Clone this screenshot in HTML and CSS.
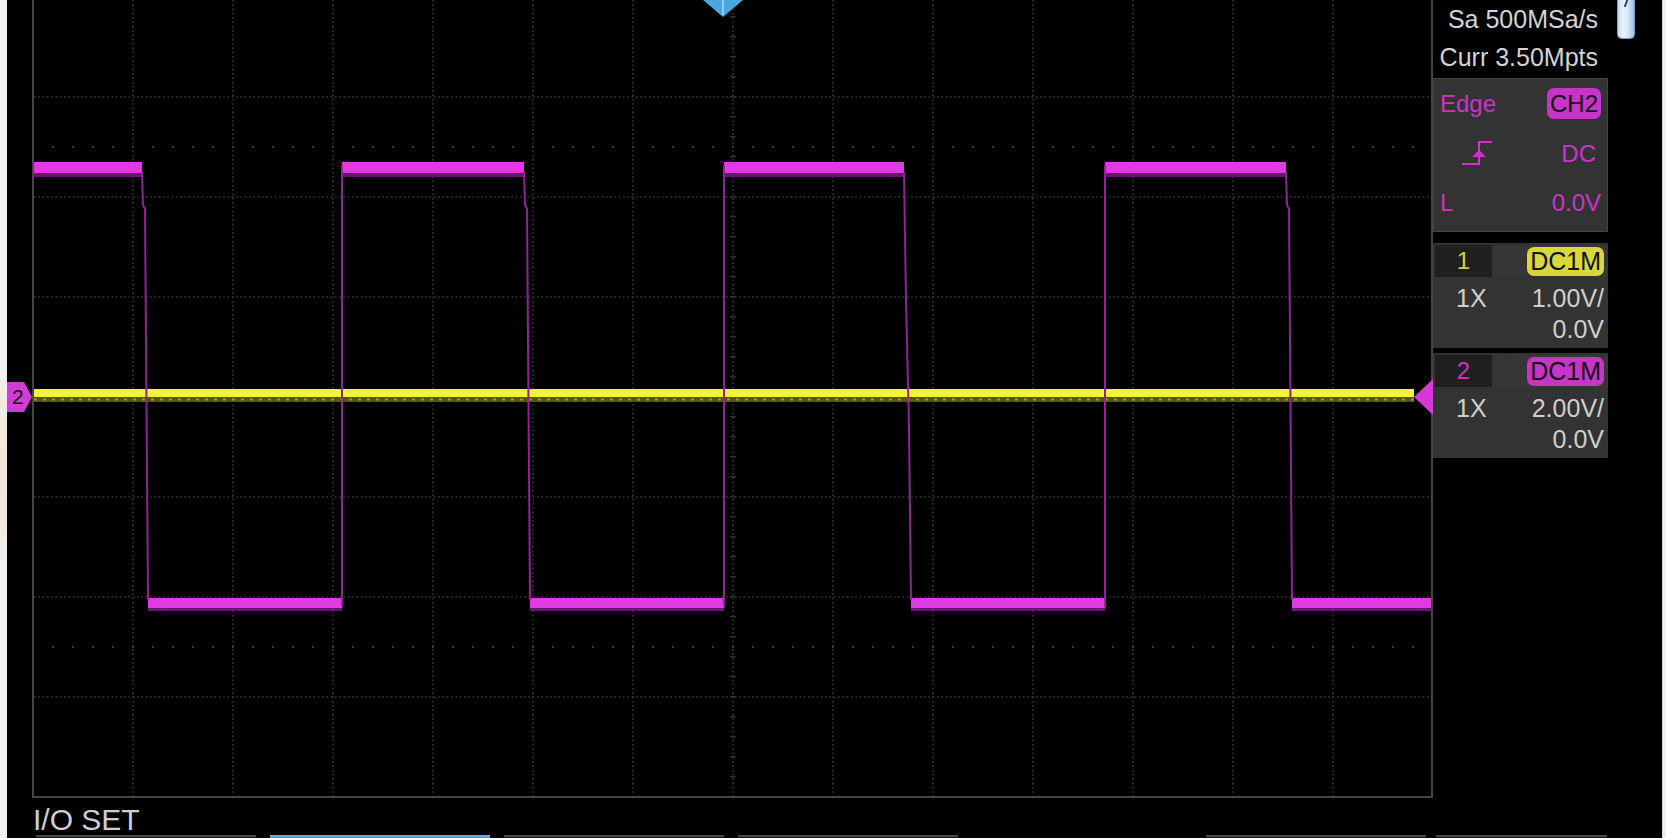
FILE: index.html
```html
<!DOCTYPE html>
<html>
<head>
<meta charset="utf-8">
<link rel="stylesheet" href="styles.css">
</head>
<body>
<div class="page">
  <div class="edge-left"></div>
  <div class="screen">
    <div class="main">
      <div class="gutter"><div class="ch-marker">2</div></div>
      <svg class="grid" width="1401" height="800" viewBox="32 0 1401 800">
        <g stroke="#393939" stroke-width="1.6" stroke-dasharray="1.6 2.7" fill="none">
          <path d="M133 0V795M233 0V795M333 0V795M433 0V795M533 0V795M633 0V795M733 0V795M833 0V795M933 0V795M1033 0V795M1133 0V795M1233 0V795M1333 0V795"/>
          <path d="M34 97H1431M34 197H1431M34 297H1431M34 397H1431M34 497H1431M34 597H1431M34 697H1431"/>
        </g>
        <g stroke="#2e2e2e" fill="none">
          <line x1="733" y1="16" x2="733" y2="796" stroke-width="6" stroke-dasharray="1.5 18.5"/>
          <line x1="52" y1="397" x2="1431" y2="397" stroke-width="6" stroke-dasharray="1.5 18.5"/>
        </g>
        <g stroke="#3a3a3a" fill="none">
          <line x1="52" y1="147" x2="1431" y2="147" stroke-width="2" stroke-dasharray="2 18"/>
          <line x1="52" y1="647" x2="1431" y2="647" stroke-width="2" stroke-dasharray="2 18"/>
        </g>
        <g stroke="#454545" stroke-width="2" fill="none">
          <path d="M33 0V797H1432V0"/>
        </g>
        <rect x="34" y="389" width="1380" height="8" fill="#f2f23e"/>
        <rect x="34" y="397" width="1380" height="5" fill="#55550f"/>
        <line x1="34" y1="399.5" x2="1414" y2="399.5" stroke="#9a9a2a" stroke-width="2" stroke-dasharray="3 6"/>
        <g fill="#e03ae4">
          <rect x="34" y="162" width="108" height="11"/>
          <rect x="342" y="162" width="182" height="11"/>
          <rect x="724" y="162" width="180" height="11"/>
          <rect x="1105" y="162" width="181" height="11"/>
          <rect x="148" y="598" width="194" height="10"/>
          <rect x="530" y="598" width="194" height="10"/>
          <rect x="911" y="598" width="194" height="10"/>
          <rect x="1292" y="598" width="139" height="10"/>
        </g>
        <g fill="#661670">
          <rect x="34" y="173" width="108" height="4"/>
          <rect x="342" y="173" width="182" height="4"/>
          <rect x="724" y="173" width="180" height="4"/>
          <rect x="1105" y="173" width="181" height="4"/>
          <rect x="148" y="608" width="194" height="3"/>
          <rect x="530" y="608" width="194" height="3"/>
          <rect x="911" y="608" width="194" height="3"/>
          <rect x="1292" y="608" width="139" height="3"/>
        </g>
        <g stroke="#8e2496" stroke-width="2" fill="none">
          <path d="M142 172L143 205L145 209L148 600"/>
          <path d="M342 607V165"/>
          <path d="M524 172L525 205L527 209L530 600"/>
          <path d="M724 607V165"/>
          <path d="M904 172L906 300L909 427L911 600"/>
          <path d="M1105 607V165"/>
          <path d="M1286 172L1287 205L1289 209L1292 600"/>
        </g>
        <polygon points="1414,397 1433,379 1433,415" fill="#d63ad6"/>
        <polygon points="703,0 743,0 723,17" fill="#4aa6df"/>
        <line x1="723" y1="0" x2="723" y2="15" stroke="#a6daf7" stroke-width="1.5"/>
      </svg>
      <div class="panel">
        <div class="acq">
          <div class="acq-line">Sa 500MSa/s</div>
          <div class="acq-line">Curr 3.50Mpts</div>
        </div>
        <div class="trig">
          <div class="trow"><span class="mag">Edge</span><span class="pill pill-mag">CH2</span></div>
          <div class="trow">
            <svg class="edge-icon" width="30" height="25" viewBox="0 0 30 25">
              <path d="M0 23H17V1H30" stroke="#cc33cc" stroke-width="2" fill="none"/>
              <polygon points="10,16 24,16 17,9" fill="#cc33cc"/>
            </svg>
            <span class="mag dc">DC</span>
          </div>
          <div class="trow"><span class="mag">L</span><span class="mag">0.0V</span></div>
        </div>
        <div class="chan">
          <div class="chead"><div class="cnum yel">1</div><div class="ctab"><span class="pill pill-yel">DC1M</span></div></div>
          <div class="crow"><span>1X</span><span>1.00V/</span></div>
          <div class="crow end"><span>0.0V</span></div>
        </div>
        <div class="chan chan2">
          <div class="chead"><div class="cnum mag">2</div><div class="ctab"><span class="pill pill-mag">DC1M</span></div></div>
          <div class="crow"><span>1X</span><span>2.00V/</span></div>
          <div class="crow end"><span>0.0V</span></div>
        </div>
      </div>
      <div class="scroll"><div class="thumb"></div></div>
    </div>
    <div class="label">I/O SET</div>
    <div class="softkeys">
      <div class="key"></div>
      <div class="key key-on"></div>
      <div class="key"></div>
      <div class="key"></div>
      <div class="key key-hidden"></div>
      <div class="key"></div>
      <div class="key key-last"></div>
    </div>
  </div>
  <div class="edge-right"></div>
</div>
</body>
</html>
```

FILE: styles.css
```css
html, body {
  margin: 0;
  padding: 0;
  background: #000;
}
body {
  font-family: "Liberation Sans", Arial, sans-serif;
}
.page {
  display: flex;
  width: 1666px;
  height: 838px;
  overflow: hidden;
}
.edge-left {
  width: 7px;
  flex: none;
  background: linear-gradient(to bottom, #f0f0f0 0, #f0f0f0 380px, #f8ece2 395px, #f3e4d8 460px, #f1e8e0 520px, #f0f0f0 560px, #f0f0f0 100%);
}
.edge-right {
  width: 4px;
  flex: none;
  background: #f0f0f0;
  border-left: 1px solid #d8d8d8;
  box-sizing: border-box;
}
.screen {
  flex: 1;
  background: #000;
  display: flex;
  flex-direction: column;
  min-width: 0;
}
.main {
  display: flex;
  height: 800px;
  flex: none;
}
.gutter {
  width: 25px;
  flex: none;
  display: flex;
  flex-direction: column;
}
.ch-marker {
  margin-top: 382px;
  width: 25px;
  height: 30px;
  background: #d23cd6;
  clip-path: polygon(0 0, 68% 0, 100% 50%, 68% 100%, 0 100%);
  color: #111;
  font-size: 21px;
  line-height: 30px;
  padding-left: 5px;
  box-sizing: border-box;
}
.grid {
  display: block;
  flex: none;
}
.panel {
  width: 175px;
  flex: none;
  display: flex;
  flex-direction: column;
}
.acq {
  height: 76px;
  padding-right: 10px;
  text-align: right;
  color: #d4d4d4;
  font-size: 25px;
  line-height: 38px;
  white-space: nowrap;
}
.trig {
  margin-top: 2px;
  height: 154px;
  box-sizing: border-box;
  background: #333;
  border: 1px solid #444;
  padding: 0 6px 3px 6px;
  display: flex;
  flex-direction: column;
}
.trow {
  height: 50px;
  display: flex;
  align-items: center;
  justify-content: space-between;
  font-size: 24px;
}
.mag { color: #cc33cc; }
.yel { color: #d2d23a; }
.dc { margin-right: 5px; }
.edge-icon {
  display: block;
  margin-left: 22px;
}
.pill {
  color: #111;
  border-radius: 7px;
  padding: 0 3px;
  line-height: 31px;
  height: 31px;
  font-size: 24px;
}
.pill-mag { background: #c833c8; }
.pill-yel { background: #d8d83a; }
.chan {
  margin-top: 11px;
  background: #333;
  padding: 2px 0 3px 0;
  display: flex;
  flex-direction: column;
  color: #cfcfcf;
  font-size: 25px;
}
.chan2 { margin-top: 5px; }
.chead {
  display: flex;
  height: 32px;
}
.cnum {
  margin-left: 2px;
  width: 57px;
  background: #1f1f1f;
  text-align: center;
  line-height: 32px;
  font-size: 24px;
}
.ctab {
  flex: 1;
  display: flex;
  align-items: center;
  justify-content: flex-end;
  padding-right: 4px;
  border-top-left-radius: 8px;
  background: #363636;
}
.ctab .pill {
  font-size: 25px;
  height: 29px;
  line-height: 29px;
}
.crow {
  height: 31px;
  display: flex;
  align-items: center;
  justify-content: space-between;
  padding: 0 4px 0 23px;
}
.chead + .crow { margin-top: 6px; }
.crow.end { justify-content: flex-end; }
.scroll {
  margin-left: 9px;
  width: 18px;
  flex: none;
}
.thumb {
  height: 39px;
  box-sizing: border-box;
  border: 1px solid #7a9cc8;
  border-top: none;
  border-radius: 0 0 5px 5px;
  background: linear-gradient(to right, #c4dbf4 0%, #eaf3fc 35%, #d6e6f8 60%, #9dbfe6 100%);
  position: relative;
}
.thumb::before {
  content: "";
  position: absolute;
  left: 7px;
  top: 0;
  width: 2px;
  height: 7px;
  background: #2c3f5c;
  transform: skewX(-20deg);
}
.label {
  margin-top: 5px;
  height: 30px;
  line-height: 30px;
  padding-left: 26px;
  font-size: 30px;
  color: #cfcfcf;
  flex: none;
}
.softkeys {
  display: flex;
  gap: 14px;
  padding-left: 29px;
  height: 40px;
  flex: none;
}
.key {
  width: 220px;
  height: 40px;
  box-sizing: border-box;
  background: #151515;
  border-top: 2px solid #4a4a4a;
  flex: none;
}
.key-on {
  background: #3b98d6;
  border-top-color: #58ade6;
}
.key-hidden { visibility: hidden; }
.key-last {
  width: 171px;
  margin-left: -4px;
}
```
